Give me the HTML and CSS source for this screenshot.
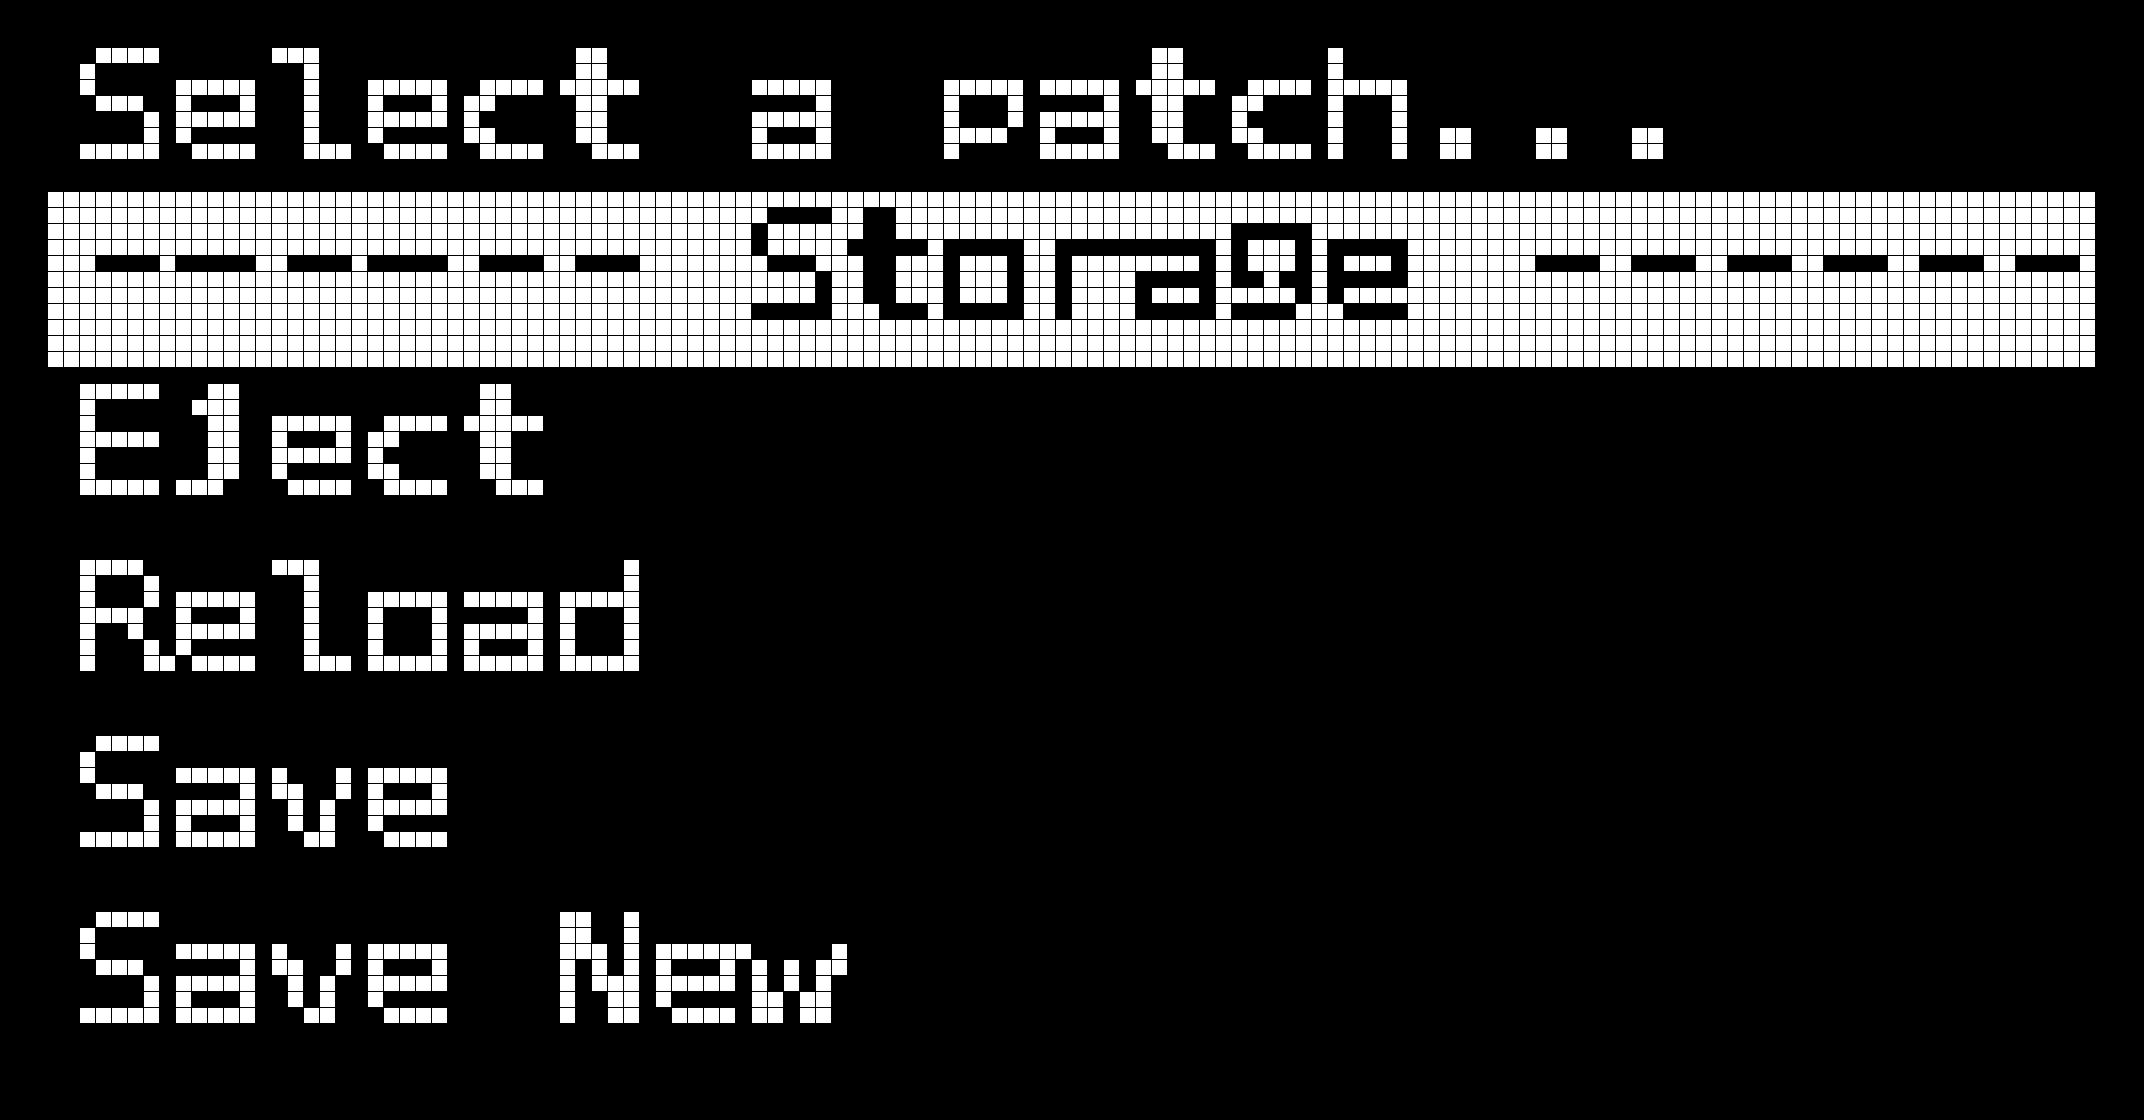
FILE: index.html
```html
<!DOCTYPE html>
<html lang="en">
<head>
<meta charset="utf-8">
<title>Select a patch</title>
<link rel="stylesheet" href="styles.css">
</head>
<body>
<svg class="defs" width="0" height="0" aria-hidden="true">
  <filter id="lcd" x="0" y="0" width="1" height="1" primitiveUnits="userSpaceOnUse" color-interpolation-filters="sRGB">
    <feMorphology in="SourceGraphic" operator="dilate" radius="1 2" result="bold"/>
    <feFlood x="7" y="7" width="1" height="1" flood-color="#fff" flood-opacity="1" result="dot"/>
    <feComposite in="dot" in2="dot" operator="over" x="0" y="0" width="16" height="16" result="cell"/>
    <feTile in="cell" result="dots"/>
    <feComposite in="bold" in2="dots" operator="in" result="samples"/>
    <feMorphology in="samples" operator="dilate" radius="7" result="big"/>
    <feComponentTransfer in="big">
      <feFuncR type="discrete" tableValues="0 1"/>
      <feFuncG type="discrete" tableValues="0 1"/>
      <feFuncB type="discrete" tableValues="0 1"/>
      <feFuncA type="discrete" tableValues="0 1"/>
    </feComponentTransfer>
  </filter>
  <filter id="lcd-inv" x="0" y="0" width="1" height="1" primitiveUnits="userSpaceOnUse" color-interpolation-filters="sRGB">
    <feMorphology in="SourceGraphic" operator="erode" radius="1 2" result="bold"/>
    <feFlood x="7" y="7" width="1" height="1" flood-color="#fff" flood-opacity="1" result="dot"/>
    <feComposite in="dot" in2="dot" operator="over" x="0" y="0" width="16" height="16" result="cell"/>
    <feTile in="cell" result="dots"/>
    <feComposite in="bold" in2="dots" operator="in" result="samples"/>
    <feMorphology in="samples" operator="dilate" radius="7" result="big"/>
    <feComponentTransfer in="big">
      <feFuncR type="discrete" tableValues="0 1"/>
      <feFuncG type="discrete" tableValues="0 1"/>
      <feFuncB type="discrete" tableValues="0 1"/>
      <feFuncA type="discrete" tableValues="0 1"/>
    </feComponentTransfer>
  </filter>
</svg>
<main class="screen">
  <div class="title"><span class="line">Select a <span class="dp">p</span>atch<span class="dots">...</span></span></div>
  <ul class="menu">
    <li class="item sel"><span class="line"><span class="dash">-</span><span class="dash">-</span><span class="dash">-</span><span class="dash">-</span><span class="dash">-</span><span class="dash">-</span> Stora<span class="dg">g</span>e <span class="dash">-</span><span class="dash">-</span><span class="dash">-</span><span class="dash">-</span><span class="dash">-</span><span class="dash">-</span></span></li>
    <li class="item"><span class="line">E<span class="dj">j</span>ect</span></li>
    <li class="item"><span class="line">Reload</span></li>
    <li class="item"><span class="line">Save</span></li>
    <li class="item"><span class="line">Save New</span></li>
  </ul>
</main>
</body>
</html>
```
FILE: styles.css
```css
html, body {
  margin: 0;
  padding: 0;
  background: #000;
}
body {
  width: 2144px;
  height: 1120px;
  padding: 48px;
  box-sizing: border-box;
  overflow: hidden;
}
.defs {
  position: absolute;
  width: 0;
  height: 0;
}
.screen {
  display: block;
  width: 2048px;
  height: 1024px;
  background: #000;
  color: #fff;
  font-family: "DejaVu Sans Mono", monospace;
  font-size: 153.6px;
  overflow: hidden;
}
.title {
  height: 144px;
  padding-left: 32px;
  box-sizing: border-box;
  filter: url(#lcd);
}
.line {
  display: block;
  height: 112px;
  line-height: 112px;
  padding-top: 4px;
  margin-left: -13px;
  box-sizing: border-box;
  white-space: pre;
  letter-spacing: -8.99px;
  transform: scaleX(1.15);
  transform-origin: 0 0;
}
.menu {
  list-style: none;
  margin: 0;
  padding: 0;
}
.item {
  height: 176px;
  padding: 16px 0 0 32px;
  box-sizing: border-box;
  filter: url(#lcd);
}
.item.sel {
  background: #fff;
  color: #000;
  filter: url(#lcd-inv);
}
.dash {
  display: inline-block;
  transform: translateY(-16px) scaleX(1.4);
  transform-origin: 46px 50%;
}
.dp, .dg, .dj, .dots {
  display: inline-block;
}
.dp {
  transform: translateY(4px) scaleY(0.67);
  transform-origin: 50% 25px;
}
.dg {
  transform: translateY(-12px) scaleY(0.8);
  transform-origin: 50% 25px;
}
.dj {
  transform: translateY(5px) scaleY(0.73);
  transform-origin: 50% -8px;
}
.dots {
  transform: translateX(-8px) scaleY(1.6);
  transform-origin: 0 109px;
}
```
